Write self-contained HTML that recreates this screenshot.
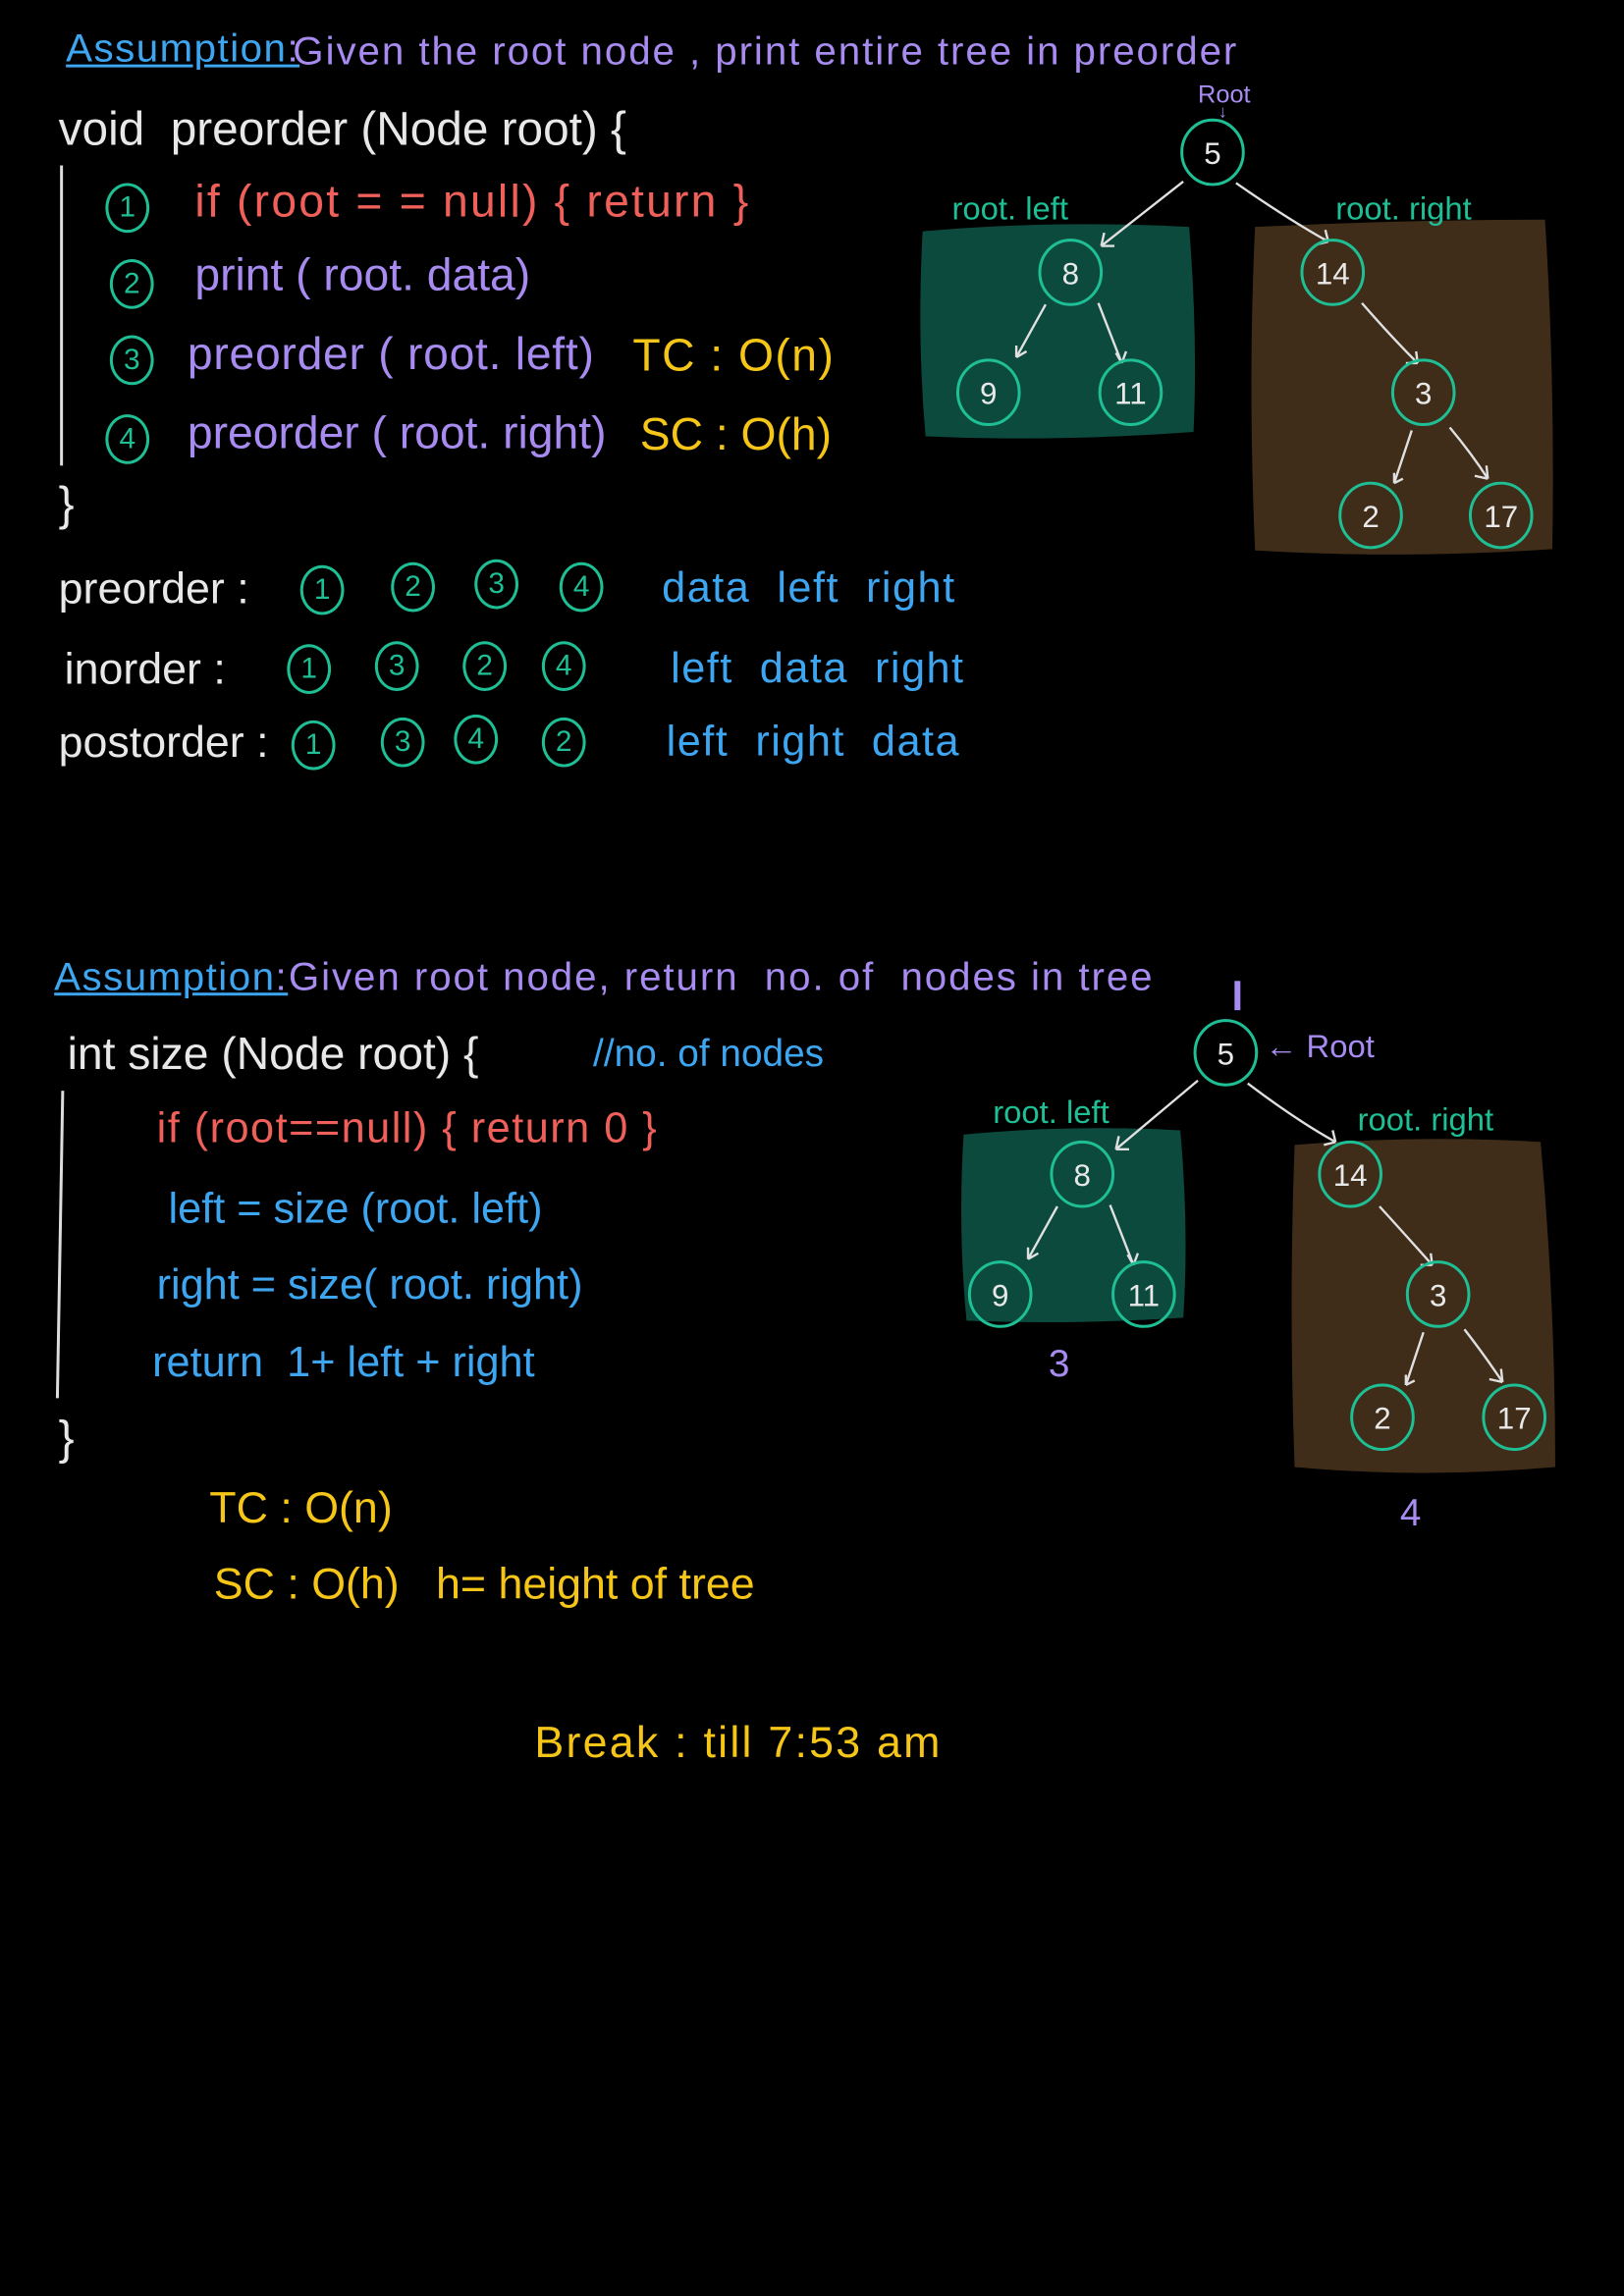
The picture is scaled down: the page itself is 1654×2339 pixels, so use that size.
<!DOCTYPE html>
<html><head><meta charset="utf-8">
<style>
html,body{margin:0;padding:0;background:#000;}
body{width:1654px;height:2339px;overflow:hidden;position:relative;}
#s{position:absolute;left:0;top:0;width:1109px;height:1568px;transform:scale(1.4915);transform-origin:0 0;font-family:"Liberation Sans",sans-serif;}
.t{position:absolute;white-space:nowrap;line-height:1;}
.w{color:#e8e8e8}.r{color:#f0605a}.p{color:#a78bf0}.y{color:#f5c518}.b{color:#3ea6f0}.g{color:#1fbf95}
.c{display:inline-block;width:26px;height:30px;border:2px solid #1fbf95;border-radius:50%;color:#1fbf95;font-size:20px;text-align:center;line-height:30px;margin-right:0}
</style></head><body><div id="s">
<div class="t b" style="left:45px;top:20px;font-size:27px;text-decoration:underline;letter-spacing:1px">Assumption<span class="p" style="text-decoration:none">: </span></div>
<div class="t p" style="left:200px;top:22px;font-size:27px;letter-spacing:1.3px">Given the root node , print entire tree in preorder</div>
<div class="t w" style="left:40px;top:72px;font-size:32px">void &nbsp;preorder (Node root) {</div>
<div style="position:absolute;left:41px;top:113px;width:2px;height:205px;background:#ddd"></div>
<div class="t" style="left:72px;top:124px;font-size:30px"><span class="c">1</span></div>
<div class="t r" style="left:133px;top:122px;font-size:31px;letter-spacing:1.5px">if (root = = null) { return }</div>
<div class="t" style="left:75px;top:176px;font-size:30px"><span class="c">2</span></div>
<div class="t p" style="left:133px;top:172px;font-size:31px">print ( root. data)</div>
<div class="t" style="left:75px;top:228px;font-size:30px"><span class="c">3</span></div>
<div class="t p" style="left:128px;top:226px;font-size:31px;letter-spacing:0.5px">preorder ( root. left)</div>
<div class="t y" style="left:432px;top:227px;font-size:31px;letter-spacing:1px">TC : O(n)</div>
<div class="t" style="left:72px;top:282px;font-size:30px"><span class="c">4</span></div>
<div class="t p" style="left:128px;top:280px;font-size:31px">preorder ( root. right)</div>
<div class="t y" style="left:437px;top:281px;font-size:31px">SC : O(h)</div>
<div class="t w" style="left:40px;top:328px;font-size:32px">}</div>
<div class="t w" style="left:40px;top:388px;font-size:30px">preorder :</div>
<div class="t" style="left:205px;top:386px"><span class="c">1</span></div><div class="t" style="left:267px;top:384px"><span class="c">2</span></div><div class="t" style="left:324px;top:382px"><span class="c">3</span></div><div class="t" style="left:382px;top:384px"><span class="c">4</span></div>
<div class="t b" style="left:452px;top:388px;font-size:29px;letter-spacing:1px">data &nbsp;left &nbsp;right</div>
<div class="t w" style="left:44px;top:443px;font-size:30px">inorder :</div>
<div class="t" style="left:196px;top:440px"><span class="c">1</span></div><div class="t" style="left:256px;top:438px"><span class="c">3</span></div><div class="t" style="left:316px;top:438px"><span class="c">2</span></div><div class="t" style="left:370px;top:438px"><span class="c">4</span></div>
<div class="t b" style="left:458px;top:443px;font-size:29px;letter-spacing:1px">left &nbsp;data &nbsp;right</div>
<div class="t w" style="left:40px;top:493px;font-size:30px">postorder :</div>
<div class="t" style="left:199px;top:492px"><span class="c">1</span></div><div class="t" style="left:260px;top:490px"><span class="c">3</span></div><div class="t" style="left:310px;top:488px"><span class="c">4</span></div><div class="t" style="left:370px;top:490px"><span class="c">2</span></div>
<div class="t b" style="left:455px;top:493px;font-size:29px;letter-spacing:1px">left &nbsp;right &nbsp;data</div>

<div class="t b" style="left:37px;top:654px;font-size:27px;text-decoration:underline;letter-spacing:1px">Assumption<span class="p" style="text-decoration:none">: </span></div>
<div class="t p" style="left:197px;top:654px;font-size:27px;letter-spacing:1.3px">Given root node, return &nbsp;no. of &nbsp;nodes in tree</div>
<div class="t w" style="left:46px;top:704px;font-size:31px">int size (Node root) {</div>
<div class="t b" style="left:405px;top:706px;font-size:26px">//no. of nodes</div>
<div style="position:absolute;left:40px;top:745px;width:2px;height:210px;background:#ddd;transform:rotate(1deg)"></div>
<div class="t r" style="left:107px;top:757px;font-size:29px;letter-spacing:1px">if (root==null) { return 0 }</div>
<div class="t b" style="left:115px;top:812px;font-size:29px">left = size (root. left)</div>
<div class="t b" style="left:107px;top:864px;font-size:29px">right = size( root. right)</div>
<div class="t b" style="left:104px;top:917px;font-size:29px">return &nbsp;1+ left + right</div>
<div class="t w" style="left:40px;top:966px;font-size:32px">}</div>
<div class="t y" style="left:143px;top:1016px;font-size:30px">TC : O(n)</div>
<div class="t y" style="left:146px;top:1068px;font-size:30px">SC : O(h) &nbsp; h= height of tree</div>
<div class="t y" style="left:365px;top:1176px;font-size:30px;letter-spacing:1.5px">Break : till 7:53 am</div>

<svg style="position:absolute;left:0;top:0" width="1109" height="1568">
<g fill="#0c4a3e"><path d="M630,158 Q720,150 812,155 Q818,230 815,295 Q720,302 632,298 Q626,230 630,158Z"/>
<path d="M658,775 Q730,768 806,772 Q812,840 808,900 Q730,905 660,902 Q654,840 658,775Z"/></g>
<g fill="#3f2d19"><path d="M857,155 Q960,150 1055,150 Q1062,260 1060,375 Q960,382 857,376 Q852,260 857,155Z"/>
<path d="M884,782 Q970,775 1052,780 Q1062,890 1062,1002 Q970,1010 884,1002 Q880,890 884,782Z"/></g>
<g stroke="#e0e0e0" stroke-width="1.6" fill="none">
<path d="M808,124 L752,168 M752,168 l2,-9 M752,168 l9,0"/>
<path d="M844,125 Q880,150 907,165 M907,165 l-2,-8 M907,165 l-8,2"/>
<path d="M714,208 L694,244 M694,244 l0,-8 M694,244 l7,-4"/>
<path d="M750,207 L766,248 M766,248 l-4,-7 M766,248 l3,-8"/>
<path d="M930,207 Q950,230 968,248 M968,248 l-1,-8 M968,248 l-8,0"/>
<path d="M964,294 L952,330 M952,330 l0,-7 M952,330 l6,-3"/>
<path d="M990,292 Q1005,310 1016,327 M1016,327 l-1,-9 M1016,327 l-9,-2"/>
<path d="M818,738 L762,785 M762,785 l2,-9 M762,785 l9,0"/>
<path d="M852,740 Q885,765 912,780 M912,780 l-2,-8 M912,780 l-8,2"/>
<path d="M722,824 L702,860 M702,860 l0,-8 M702,860 l7,-4"/>
<path d="M758,823 L774,864 M774,864 l-4,-7 M774,864 l3,-8"/>
<path d="M942,824 Q962,846 978,864 M978,864 l-1,-8 M978,864 l-8,0"/>
<path d="M972,910 L960,946 M960,946 l0,-7 M960,946 l6,-3"/>
<path d="M1000,908 Q1014,926 1026,944 M1026,944 l-1,-9 M1026,944 l-9,-2"/>
</g>
<g stroke="#1fbf95" stroke-width="2" fill="none">
<ellipse cx="828" cy="104" rx="21" ry="22"/><ellipse cx="731" cy="186" rx="21" ry="22"/><ellipse cx="675" cy="268" rx="21" ry="22"/><ellipse cx="772" cy="268" rx="21" ry="22"/>
<ellipse cx="910" cy="186" rx="21" ry="22"/><ellipse cx="972" cy="268" rx="21" ry="22"/><ellipse cx="936" cy="352" rx="21" ry="22"/><ellipse cx="1025" cy="352" rx="21" ry="22"/>
<ellipse cx="837" cy="719" rx="21" ry="22"/><ellipse cx="739" cy="802" rx="21" ry="22"/><ellipse cx="683" cy="884" rx="21" ry="22"/><ellipse cx="781" cy="884" rx="21" ry="22"/>
<ellipse cx="922" cy="802" rx="21" ry="22"/><ellipse cx="982" cy="884" rx="21" ry="22"/><ellipse cx="944" cy="968" rx="21" ry="22"/><ellipse cx="1034" cy="968" rx="21" ry="22"/>
</g>
<g fill="#e8e8e8" font-family="Liberation Sans" font-size="21" text-anchor="middle">
<text x="828" y="112">5</text><text x="731" y="194">8</text><text x="675" y="276">9</text><text x="772" y="276">11</text>
<text x="910" y="194">14</text><text x="972" y="276">3</text><text x="936" y="360">2</text><text x="1025" y="360">17</text>
<text x="837" y="727">5</text><text x="739" y="810">8</text><text x="683" y="892">9</text><text x="781" y="892">11</text>
<text x="922" y="810">14</text><text x="982" y="892">3</text><text x="944" y="976">2</text><text x="1034" y="976">17</text>
</g>
<g fill="#1fbf95" font-family="Liberation Sans" font-size="22">
<text x="650" y="150">root. left</text><text x="912" y="150">root. right</text>
<text x="678" y="767">root. left</text><text x="927" y="772">root. right</text>
</g>
<g fill="#a78bf0" font-family="Liberation Sans">
<text x="818" y="70" font-size="17">Root</text><text x="832" y="80" font-size="12">↓</text>
<text x="864" y="722" font-size="22">← Root</text>
<rect x="843" y="670" width="4" height="20"/>
<text x="716" y="940" font-size="26">3</text><text x="956" y="1042" font-size="26">4</text>
</g>
</svg>
</div></body></html>
